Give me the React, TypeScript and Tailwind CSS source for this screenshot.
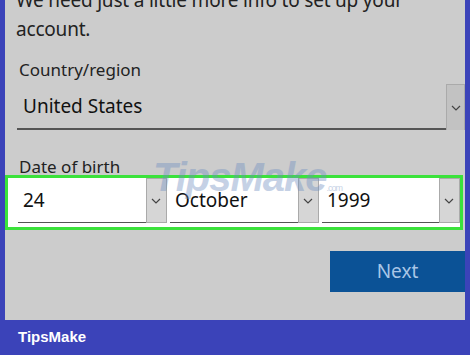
import React from "react";

function Chevron() {
  return (
    <svg width="10" height="6" viewBox="0 0 10 6" fill="none">
      <path d="M1 1l4 4 4-4" stroke="#444" strokeWidth="1.2" />
    </svg>
  );
}

function DateSelect({ value, width }: { value: string; width: string }) {
  return (
    <div className={`flex h-[45px] ${width}`}>
      <div className="flex flex-1 items-center border-b border-[#555] pl-[5px] text-[19px] text-[#111]">{value}</div>
      <div className="flex w-[21px] items-center justify-center border border-[#aaa] bg-[#d6d6d6]">
        <Chevron />
      </div>
    </div>
  );
}

export default function App() {
  return (
    <div
      className="flex h-[355px] w-[470px] flex-col bg-[#3b43b9]"
      style={{ fontFamily: '"Noto Sans", "Open Sans", sans-serif' }}
    >
      <div className="relative mx-[5px] h-[320px] overflow-hidden bg-[#cccccc]">
        <p className="mt-[-14px] pl-[11px] text-[19px] leading-[29px] tracking-[-0.2px] text-[#222]">
          We need just a little more info to set up your
          <br />
          account.
        </p>
        <p className="mt-[15px] pl-[14px] text-[17px] leading-[22px] text-[#222]">Country/region</p>
        <div className="ml-[12px] mt-[3px] flex h-[46px]">
          <div className="flex flex-1 items-center border-b-2 border-[#555] pl-[6px] text-[19px] text-[#111]">
            United States
          </div>
          <div className="flex w-[19px] items-center justify-center border border-[#aaa] border-b-0 bg-[#c2c2c2]">
            <Chevron />
          </div>
        </div>
        <p className="mt-[26px] pl-[14px] text-[17px] leading-[22px] text-[#222]">Date of birth</p>
        <div className="mt-[-3px] flex w-[458px] gap-[3px] border-[3px] border-[#3be23b] bg-white pb-[4px] pl-[10px]">
          <DateSelect value="24" width="w-[150px]" />
          <DateSelect value="October" width="w-[150px]" />
          <DateSelect value="1999" width="w-[139px]" />
        </div>
        <div className="mt-[21px] flex justify-end">
          <button className="h-[41px] w-[135px] bg-[#0b5296] text-[19px] text-[#a9c6e6]">Next</button>
        </div>
        <div
          className="pointer-events-none absolute left-[148px] top-[157px] text-[40px] font-black italic leading-none tracking-tight text-[#6f8fc0] opacity-40"
          style={{ fontFamily: '"Liberation Sans", sans-serif' }}
        >
          TipsMake<span className="text-[9px] font-normal not-italic">.com</span>
        </div>
      </div>
      <div
        className="flex flex-1 items-center pl-[18px] text-[15px] font-bold text-white"
        style={{ fontFamily: '"Liberation Sans", sans-serif' }}
      >
        TipsMake
      </div>
    </div>
  );
}
